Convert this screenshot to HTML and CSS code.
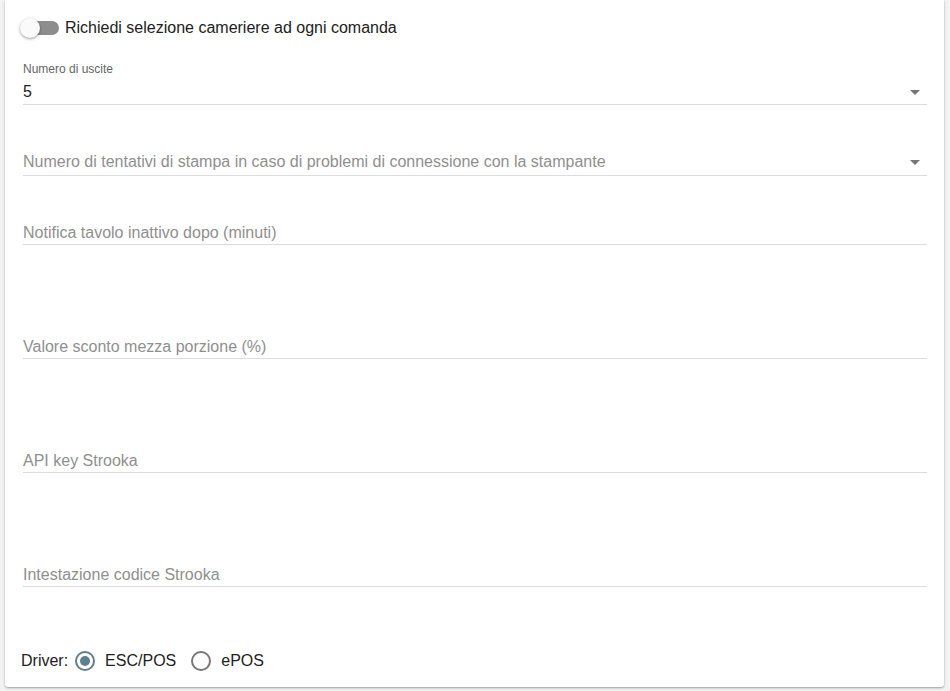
FILE: index.html
```html
<!DOCTYPE html>
<html lang="it">
<head>
  <meta charset="UTF-8" />
  <meta name="viewport" content="width=device-width, initial-scale=1.0"/>
  <title>Impostazioni</title>
  <link rel="stylesheet" href="styles.css">
</head>
<body>

  <div class="card">

    <!-- Toggle -->
    <label class="toggle-row">
      <span class="toggle"><span class="thumb"></span></span>
      <span>Richiedi selezione cameriere ad ogni comanda</span>
    </label>

    <div class="field field-select has-label">
      <div class="field-label">Numero di uscite</div>
      <div class="field-row">
        <span class="value">5</span>
        <span class="arrow"></span>
      </div>
    </div>

    <div class="field field-select second">
      <div class="field-row">
        <span class="placeholder">Numero di tentativi di stampa in caso di problemi di connessione con la stampante</span>
        <span class="arrow"></span>
      </div>
    </div>

    <div class="field field-text first-text">
      <div class="field-row"><span class="placeholder">Notifica tavolo inattivo dopo (minuti)</span></div>
    </div>

    <div class="field field-text">
      <div class="field-row"><span class="placeholder">Valore sconto mezza porzione (%)</span></div>
    </div>

    <div class="field field-text">
      <div class="field-row"><span class="placeholder">API key Strooka</span></div>
    </div>

    <div class="field field-text">
      <div class="field-row"><span class="placeholder">Intestazione codice Strooka</span></div>
    </div>

    <div class="driver-row">
      <span>Driver:</span>
      <span class="radio checked"></span>
      <span class="radio-label">ESC/POS</span>
      <span class="radio"></span>
      <span class="radio-label">ePOS</span>
    </div>

  </div>

</body>
</html>
```

FILE: styles.css
```css
body {
  margin: 0;
  background: #f3f3f3;
  font-family: "Liberation Sans", Arial, sans-serif;
  color: #212121;
  height: 691px;
  overflow: hidden;
}

.card {
  margin-left: 5px;
  width: 939px;
  box-sizing: border-box;
  padding: 10px 17px 14px 15px;
  background: #fff;
  border-radius: 0 0 3px 3px;
  box-shadow: 0 1px 3px rgba(0, 0, 0, 0.25), 0 1px 1px rgba(0, 0, 0, 0.12);
}

.toggle-row {
  display: flex;
  align-items: center;
  height: 36px;
  font-size: 16px;
}

.toggle {
  position: relative;
  width: 34px;
  height: 14px;
  margin-left: 5px;
  margin-right: 6px;
  border-radius: 7px;
  background: #8d8d8d;
}

.thumb {
  position: absolute;
  left: -5px;
  top: -3px;
  width: 20px;
  height: 20px;
  border-radius: 50%;
  background: #fafafa;
  box-shadow: 0 1px 3px rgba(0, 0, 0, 0.4);
}

.field {
  margin-left: 3px;
  border-bottom: 1px solid #dcdcdc;
}

.has-label {
  margin-top: 16px;
}

.field-label {
  font-size: 12px;
  line-height: 14px;
  color: #666;
}

.field-row {
  display: flex;
  align-items: center;
  justify-content: space-between;
  font-size: 16px;
  line-height: 20px;
}

.has-label .field-row {
  margin-top: 6px;
  padding-bottom: 2px;
}

.second {
  margin-top: 47px;
}

.second .field-row {
  padding-bottom: 3px;
}

.field-text {
  margin-top: 92px;
}

.field-text .field-row {
  padding-bottom: 1px;
}

.first-text {
  margin-top: 47px;
}

.placeholder {
  color: #8f8f8f;
}

.arrow {
  width: 0;
  height: 0;
  margin-right: 7px;
  border-left: 5px solid transparent;
  border-right: 5px solid transparent;
  border-top: 5px solid #757575;
}

.driver-row {
  display: flex;
  align-items: center;
  height: 24px;
  margin-top: 62px;
  margin-left: 1px;
  font-size: 16px;
}

.radio {
  width: 16px;
  height: 16px;
  border: 2px solid #777;
  border-radius: 50%;
  margin: 0 10px 0 7px;
  box-sizing: content-box;
  position: relative;
}

.radio.checked {
  border-color: #5f7f8f;
}

.radio.checked::after {
  content: "";
  position: absolute;
  left: 3px;
  top: 3px;
  width: 10px;
  height: 10px;
  border-radius: 50%;
  background: #5f7f8f;
}

.radio-label {
  margin-right: 8px;
}
```
